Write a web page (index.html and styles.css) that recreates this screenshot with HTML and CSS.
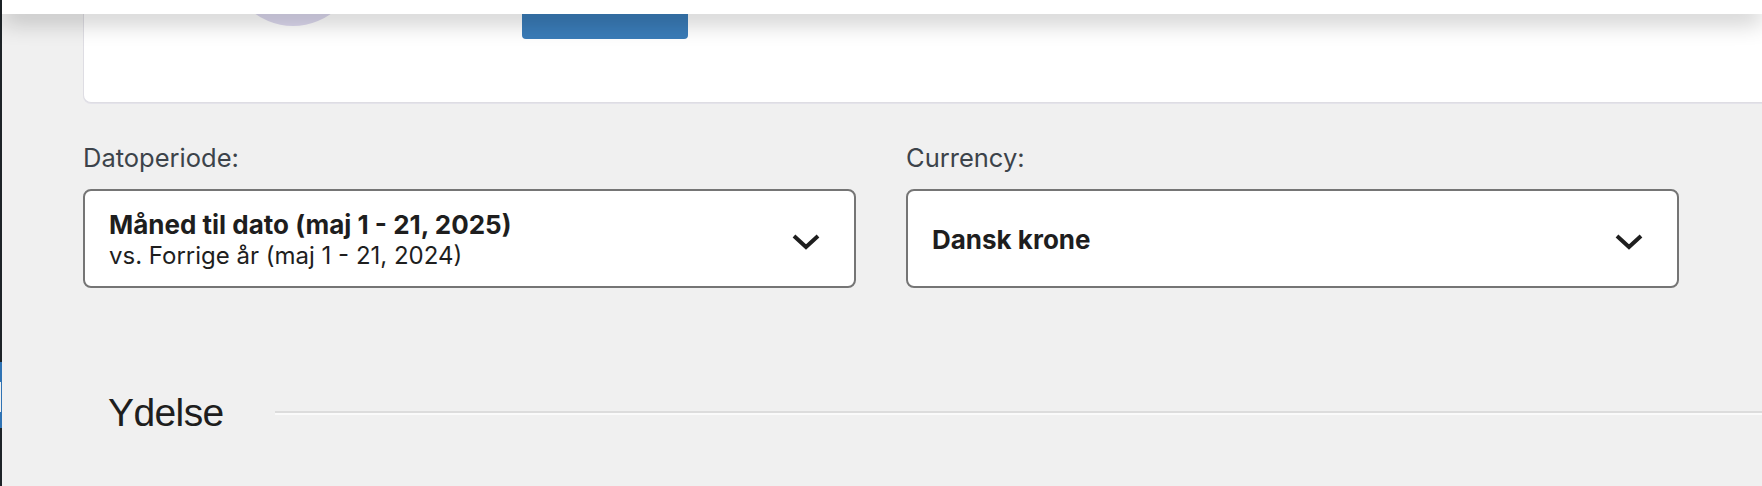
FILE: index.html
```html
<!DOCTYPE html>
<html>
<head>
    <title>Analyser - Oversigt</title>
    <link rel="stylesheet" href="styles.css">
</head>
<body>
    <!-- Admin menu edge -->
    <div class="admin-menu">
        <span class="menu-active"><span class="menu-notch"></span></span>
    </div>

    <div class="page">
        <!-- Sticky header -->
        <header class="topbar"></header>

        <main class="content">
            <!-- Welcome card (scrolled out) -->
            <div class="card">
                <div class="card-row">
                    <div class="avatar"></div>
                    <button class="btn-primary" type="button" aria-label="Byg rapport"></button>
                </div>
            </div>

            <!-- Filters -->
            <div class="filters">
                <div class="filter">
                    <label class="filter-label">Datoperiode:</label>
                    <button class="dropdown" type="button">
                        <span class="dropdown-labels">
                            <span class="dropdown-main">Måned til dato (maj 1 - 21, 2025)</span>
                            <span class="dropdown-sub">vs. Forrige år (maj 1 - 21, 2024)</span>
                        </span>
                        <svg class="chevron" width="28" height="16" viewBox="0 0 28 16">
                            <polyline points="2,2 14,13 26,2" fill="none" stroke="#1e1e1e" stroke-width="4"/>
                        </svg>
                    </button>
                </div>
                <div class="filter">
                    <label class="filter-label">Currency:</label>
                    <button class="dropdown" type="button">
                        <span class="dropdown-labels">
                            <span class="dropdown-main">Dansk krone</span>
                        </span>
                        <svg class="chevron" width="28" height="16" viewBox="0 0 28 16">
                            <polyline points="2,2 14,13 26,2" fill="none" stroke="#1e1e1e" stroke-width="4"/>
                        </svg>
                    </button>
                </div>
            </div>

            <!-- Section heading -->
            <div class="section-head">
                <h2>Ydelse</h2>
                <span class="rule"></span>
            </div>
        </main>
    </div>
</body>
</html>
```

FILE: styles.css
```css
html, body {
    height: 100%;
}
body {
    margin: 0;
    display: flex;
    overflow: hidden;
    font-family: Inter, "Noto Sans", sans-serif;
    background-color: #f0f0f0; /* WP admin background */
    color: #1e1e1e;
}
.admin-menu {
    width: 2px;
    flex-shrink: 0;
    background-color: #1d2327;
    display: flex;
    flex-direction: column;
    padding-top: 362px;
}
.menu-active {
    height: 66px;
    background-color: #2f73b4;
    display: flex;
    flex-direction: column;
    padding-top: 20px;
    box-sizing: border-box;
}
.menu-notch {
    width: 1px;
    height: 30px;
    background-color: #f0f0f0;
}
.page {
    flex: 1;
    min-width: 0;
}
.topbar {
    position: fixed;
    top: 0;
    left: 2px;
    right: 0;
    height: 14px;
    background-color: #fff;
    box-shadow: 0 6px 24px rgba(0, 0, 0, 0.3); /* header shadow */
    z-index: 10;
}
.content {
    padding-left: 81px;
}
.card {
    margin-top: -150px;
    height: 253px;
    box-sizing: border-box;
    background-color: #fff;
    border: 1px solid #dedde3;
    border-right: none;
    border-radius: 8px 0 0 8px;
    box-shadow: 0 1px 0 #e4e3ea;
}
.card-row {
    display: flex;
    align-items: flex-start;
}
.avatar {
    width: 130px;
    height: 130px;
    flex-shrink: 0;
    margin-top: 45px;
    margin-left: 144px;
    border-radius: 50%;
    background-color: #dcd8ee;
}
.btn-primary {
    margin-top: 148px;
    margin-left: 164px;
    width: 166px;
    height: 40px;
    border: none;
    border-radius: 4px;
    background-color: #3a7cb8;
    padding: 0;
}
.filters {
    display: flex;
    gap: 50px;
    margin-top: 39px;
}
.filter {
    width: 773px;
}
.filter-label {
    display: block;
    font-size: 25.5px;
    line-height: 32px;
    color: #3c434a;
    margin-bottom: 15px;
}
.dropdown {
    width: 100%;
    height: 99px;
    box-sizing: border-box;
    display: flex;
    align-items: center;
    justify-content: space-between;
    padding: 0 34px 0 24px;
    background-color: #fff;
    border: 2px solid #757575;
    border-radius: 8px;
    font-family: inherit;
    color: #1e1e1e;
    text-align: left;
}
.dropdown-labels {
    display: flex;
    flex-direction: column;
    padding-top: 3px;
}
.dropdown-main {
    font-size: 26px;
    font-weight: bold;
    line-height: 32px;
}
.dropdown-sub {
    font-size: 24px;
    line-height: 30px;
}
.chevron {
    margin-top: 6px;
}
.section-head {
    display: flex;
    align-items: center;
    margin-top: 101px;
    padding-left: 25px;
}
.section-head h2 {
    margin: 0;
    font-family: "Liberation Sans", Arial, sans-serif;
    font-size: 39px;
    letter-spacing: -0.6px;
    font-weight: normal;
    line-height: 48px;
    color: #1e1e1e;
}
.rule {
    flex: 1;
    margin-left: 51px;
    height: 0;
    border-top: 2px solid #dcdcdc;
    border-bottom: 2px solid #fafafa;
}
```
